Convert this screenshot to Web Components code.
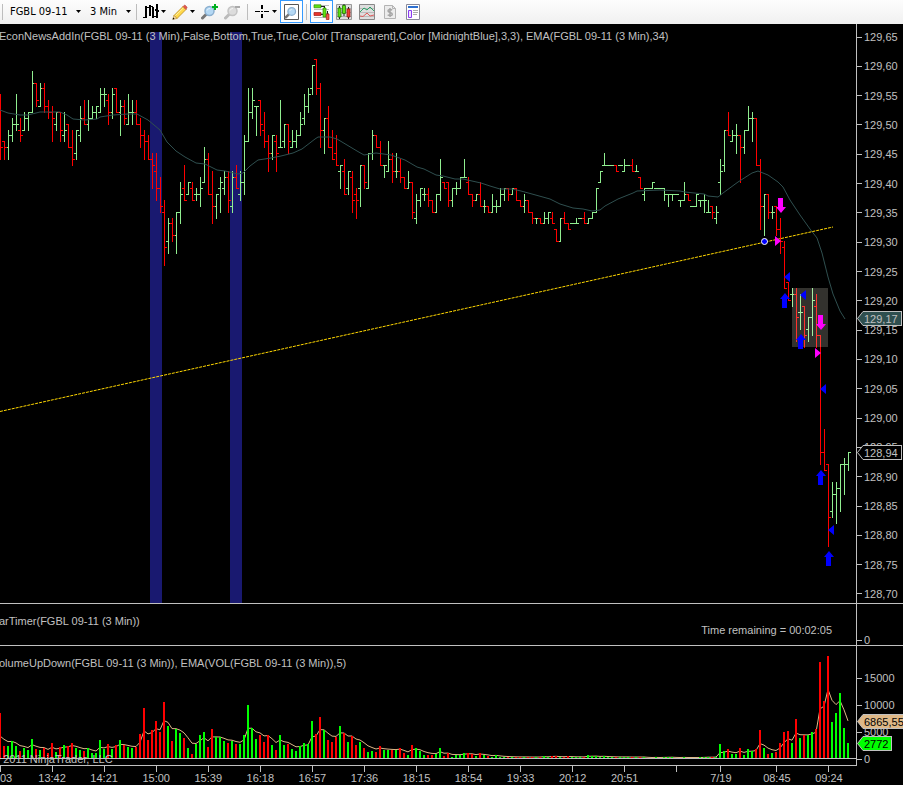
<!DOCTYPE html>
<html lang="en">
<head>
<meta charset="utf-8">
<title>FGBL 09-11 (3 Min)</title>
<style>
  body {
    margin: 0;
    background: #000;
    color: #c0c0c0;
    font: 11px/12px "Liberation Sans", Arial, sans-serif;
  }
</style>
</head>
<body>
<chart-window>
  <tool-bar slot="toolbar"></tool-bar>
  <chart-pane slot="price" caption="EconNewsAddIn(FGBL 09-11 (3 Min),False,Bottom,True,True,Color [Transparent],Color [MidnightBlue],3,3), EMA(FGBL 09-11 (3 Min),34)">
    <price-plot></price-plot>
    <value-axis slot="axis" from="129.65" to="128.70" step="0.05" digits="2" style="--top: 7px; --bottom: 3px">
      <price-tag style="--at: 287px; --fill: #2f4f4f">129,17</price-tag>
      <price-tag style="--at: 421px">128,94</price-tag>
    </value-axis>
  </chart-pane>
  <chart-pane slot="timer" caption="arTimer(FGBL 09-11 (3 Min))">
    <bar-timer>Time remaining = 00:02:05</bar-timer>
    <value-axis slot="axis" from="0" to="0" step="1" style="--top: 30px; --bottom: 0px"></value-axis>
  </chart-pane>
  <chart-pane slot="volume" caption="olumeUpDown(FGBL 09-11 (3 Min)), EMA(VOL(FGBL 09-11 (3 Min)),5)">
    <volume-plot></volume-plot>
    <value-axis slot="axis" from="15000" to="0" step="5000" style="--top: 26px; --bottom: 0px">
      <price-tag style="--at: 68px; --fill: #deb887; --ink: #000">6865,55</price-tag>
      <price-tag style="--at: 90px; --fill: #0f0; --ink: #000">2772</price-tag>
    </value-axis>
  </chart-pane>
  <time-axis slot="time"></time-axis>
</chart-window>

<script>
/**
 * html is a template tag used to construct a <template>.
 * @param {TemplateStringsArray} strings
 */
function html(strings, ...values) {
  const template = document.createElement("template");
  template.innerHTML = String.raw(strings, ...values);
  return template;
}

class BaseElement extends HTMLElement {
  constructor() {
    super();
    this.attachShadow({ mode: "open" }).appendChild(
      this.constructor.template.content.cloneNode(true)
    );
  }
}

// One entry per 3 minute bar: direction, then open, high, low and close in
// ticks below 129.60, then the height of the volume bar.
const bars = `
r5 5 16 14 45|r13 13 16 14 12|g14 11 16 12 12|g12 9 13 10 17|g10 5 11 10 12|r11 9 13 12 7
g11 8 11 9 10|g9 8 11 8 8|g8 1 8 3 19|r3 3 7 6 9|g7 3 7 4 8|r4 3 8 7 10
r7 6 9 8 5|r8 7 13 9 15|g10 8 11 8 6|r8 8 13 11 11|g12 8 13 11 13|r10 10 14 14 12
r14 11 17 16 15|g15 11 16 11 10|g12 7 13 9 8|r9 6 10 10 7|g10 6 11 9 10|g9 7 9 8 5
g8 7 9 7 5|g8 4 8 5 18|g5 4 7 5 9|r6 5 10 8 14|g8 4 9 5 9|r4 4 8 8 13
g8 6 12 7 18|r7 6 10 9 13|g10 5 10 8 11|g8 6 10 8 10|r8 6 10 10 11|r10 9 14 12 24
r12 11 16 13 50|r13 12 16 16 18|r16 15 21 17 28|r18 15 23 21 37|r21 19 25 24 26|r25 23 34 31 56
g30 26 32 27 32|r27 26 30 29 17|g29 25 32 25 29|g25 20 27 22 25|r21 17 23 23 20|g22 20 22 20 10
r21 20 23 23 4|g22 21 23 22 14|g22 19 24 21 23|g20 14 20 16 26|r16 15 22 22 11|r22 18 27 24 29
g24 22 26 22 21|g21 19 25 20 21|g21 18 22 19 17|r19 18 25 23 15|g24 18 25 19 17|r19 17 21 21 14
g22 18 23 20 14|g20 12 22 13 23|g13 4 13 8 53|g8 4 9 6 30|g7 7 12 7 19|r6 6 12 10 23
r11 8 14 13 16|r13 12 18 15 23|g15 12 16 12 13|r13 12 18 15 8|g14 6 14 14 23|g13 10 14 10 13
r10 10 15 13 14|g14 11 14 13 9|g13 11 14 12 7|g12 8 12 10 12|g9 5 10 7 15|g7 4 8 5 14
g4 0 5 0 37|r-1 -1 5 4 24|r4 3 14 11 41|g11 9 15 9 28|r9 7 14 14 18|r14 11 16 16 16
r15 12 17 17 21|g18 17 21 17 32|r18 16 22 22 25|g21 18 22 18 16|r19 18 25 23 22|r22 21 26 23 13
g21 17 24 17 16|r17 17 21 20 10|g21 15 21 15 6|g15 11 16 12 7|r12 12 14 14 6|r14 13 17 17 12
g17 17 19 17 8|g18 13 18 16 8|r16 15 20 18 8|g18 15 19 18 8|r18 16 20 19 10|r19 19 21 21 5
g21 18 21 20 3|r20 20 26 25 13|g26 22 27 23 10|g23 21 24 21 7|g22 21 23 22 3|r22 21 24 23 3
r23 23 25 25 3|g25 22 25 22 4|g22 16 23 19 10|r20 20 21 21 2|r20 20 24 23 5|g23 21 24 21 1
g21 20 22 21 3|g21 19 21 19 3|g19 16 19 19 5|r20 19 22 22 5|r22 22 24 23 4|g23 22 23 22 2
r22 20 24 24 5|g24 23 25 24 3|r24 24 25 25 2|g25 22 25 24 1|g24 23 25 24 3|g24 21 24 22 1
g22 21 23 21 1|r21 21 23 22 1|g22 21 22 21 1|r21 21 23 23 1|r23 23 24 24 1|g24 22 25 23 1
r23 23 25 25 1|r25 25 27 26 1|g26 26 27 26 1|r26 26 27 27 1|g27 25 27 26 2|g26 25 27 25 1
r26 25 27 27 2|r28 28 30 30 2|g30 26 30 26 1|r26 25 27 27 1|r27 27 28 28 2|g27 27 27 27 1
g27 26 27 27 1|g26 26 26 26 1|r26 25 27 27 1|g27 26 27 26 3|g26 25 26 25 2|g25 21 25 21 2
g20 18 20 18 1|g17 15 17 17 2|g17 17 17 17 1|g17 17 17 17 1|r17 17 18 18 1|g17 17 17 17 1
g18 16 18 17 1|g17 17 17 17 1|r17 16 18 18 1|g18 17 18 18 1|r19 19 21 21 1|g22 21 23 21 1
g21 21 21 21 0|g21 20 21 20 0|g21 21 21 21 1|g21 21 21 21 0|g21 21 23 22 1|g22 22 24 22 1
g22 22 23 22 1|g22 22 22 22 0|g23 23 24 23 0|g23 20 23 22 1|r22 22 23 23 0|g24 24 24 24 0
g24 22 24 22 0|g23 23 24 23 1|g23 22 25 23 1|g25 23 25 25 1|r24 24 26 25 1|g26 24 27 25 1
g20 16 22 18 14|g17 11 18 11 7|r11 8 12 12 9|g13 11 13 12 4|g12 10 15 12 4|r12 12 20 14 10
g14 11 15 11 3|g11 7 11 9 9|g9 8 13 9 7|r9 9 17 17 9|r17 16 28 24 28|g24 22 29 22 10
r22 22 26 25 4|g25 24 26 25 5|r24 24 29 28 6|r28 26 32 30 15|r31 30 38 38 26|r37 37 40 40 27
g39 38 41 39 15|r39 38 47 43 39|g42 39 45 42 20|r41 41 48 46 23|g45 43 47 43 23|g43 38 46 40 26
r41 39 48 46 29|r46 46 68 66 96|r66 62 69 69 57|r68 68 82 77 102|g76 71 77 73 36|g73 71 78 72 45
g72 68 76 68 65|g68 67 73 68 30|g68 66 69 66 15`
  .trim()
  .split(/[|\n]/)
  .map((bar) => {
    const [open, high, low, close, volume] = bar.slice(1).split(" ").map(Number);
    return { up: bar[0] === "g", open, high, low, close, volume };
  });

const BAR_WIDTH = 4;

/** Draws one colour's open/high/low/close bars as a single path. */
function ohlcPath(up) {
  const y = (tick) => Math.round(41 + tick * 5.87);
  return bars
    .map((bar, i) => {
      if (bar.up !== up) return "";
      const x = i * BAR_WIDTH;
      const height = y(bar.low) - y(bar.high) + 1;
      return (
        `M${x} ${y(bar.high)}h1v${height}h-1z` +
        `M${x - 2} ${y(bar.open)}h2v1h-2z` +
        `M${x + 1} ${y(bar.close)}h2v1h-2z`
      );
    })
    .join("");
}

function volumePath(up) {
  return bars
    .map((bar, i) =>
      bar.up === up && bar.volume
        ? `M${i * BAR_WIDTH - 1} 112v-${bar.volume}h2v${bar.volume}z`
        : ""
    )
    .join("");
}

/** Exponential average of the volume, 5 bars. */
function volumeEma() {
  let ema = 22;
  return bars
    .map((bar, i) => {
      if (i) ema += (bar.volume - ema) / 3;
      return `${i * BAR_WIDTH},${(112 - Math.max(ema, 0.5)).toFixed(1)}`;
    })
    .join(" ");
}

const arrow = "M-2-7h5v9h3l-5 6-5-6h2z";
const upArrow = "M-2 8h5v-9h3l-5-6-5 6h2z";

class PricePlot extends BaseElement {
  static template = html`
    <style>
      :host { display: block; height: 100%; }
      svg { display: block; width: 100%; height: 100%; }
      .crisp { shape-rendering: crispEdges; }
    </style>
    <svg viewBox="0 0 856 579" preserveAspectRatio="none" aria-label="Price">
      <g class="crisp">
        <path fill="#191970" d="M150 8h12v571h-12zM230 8h12v571h-12z"/>
        <path fill="#90ee90" d="${ohlcPath(true)}"/>
        <path fill="#f00" d="${ohlcPath(false)}"/>
      </g>
      <polyline fill="none" stroke="#2f4f4f" points="0,86 8,89 20,91 28,91 40,88 60,88 67,91 73,95 85,96 97,95
        100,93 113,91 128,90 137,90 148,96 160,106 167,118 176,127 185,133 196,139 205,140 217,146 225,147
        238,150 243,149 250,142 258,136 271,134 281,132 285,131 293,129 302,125 315,115 318,113 330,113
        337,115 347,121 357,127 364,131 376,129 391,131 405,136 417,143 424,145 436,151 443,152 455,155
        463,155 481,159 490,162 500,165 512,165 521,167 532,170 550,175 560,180 573,184 583,185 592,187
        600,186 605,182 618,175 633,169 637,167 660,166 680,167 685,168 704,170 708,172 718,173 723,169
        738,158 752,149 758,147 768,151 778,158 783,163 790,176 800,191 810,205 817,214 822,229 828,253
        833,270 840,287 845,295"/>
      <path stroke="#ffd700" stroke-dasharray="3 1" d="M0 387.5 833 203"/>
      <path class="crisp" fill="#fffae6" fill-opacity=".2" d="M792 264h36v59h-36z"/>
      <g fill="#f0f">
        <path transform="translate(780 181)" d="${arrow}"/>
        <path transform="translate(820 298)" d="${arrow}"/>
        <path d="M775 212v10l6-5zM815 324v10l6-5z"/>
      </g>
      <g fill="#00f">
        <path transform="translate(784 276)" d="${upArrow}"/>
        <path transform="translate(800 317)" d="${upArrow}"/>
        <path transform="translate(820 453)" d="${upArrow}"/>
        <path transform="translate(828 534)" d="${upArrow}"/>
        <path d="M790 248v10l-6-5zM806 266v10l-6-5zM826 360v10l-6-5zM834 501v10l-6-5z"/>
      </g>
      <circle cx="764.5" cy="217.5" r="3" fill="#00f" stroke="#fff"/>
    </svg>
  `;
}

class VolumePlot extends BaseElement {
  static template = html`
    <style>
      :host { display: block; height: 100%; }
      svg { display: block; width: 100%; height: 100%; }
      p { position: absolute; left: -8px; bottom: 0; margin: 0; white-space: pre; }
    </style>
    <svg viewBox="0 0 856 119" preserveAspectRatio="none" aria-label="Volume">
      <polyline fill="none" stroke="#deb887" points="${volumeEma()}"/>
      <g shape-rendering="crispEdges">
        <path fill="#0f0" d="${volumePath(true)}"/>
        <path fill="#f00" d="${volumePath(false)}"/>
        <path fill="#c0c0c0" d="M0 112h856v1H0z"/>
      </g>
    </svg>
    <p>© 2011 NinjaTrader, LLC</p>
  `;
}

class BarTimer extends BaseElement {
  static template = html`
    <style>
      :host { display: block; padding: 20px 24px 0 0; text-align: right; }
    </style>
    <slot></slot>
  `;
}

class ChartPane extends BaseElement {
  static template = html`
    <style>
      :host { display: flex; min-height: 0; }
      .plot { position: relative; flex: 1; min-width: 0; overflow: hidden; }
      .caption { position: absolute; left: -1px; top: 0; margin: 0; padding-top: var(--caption-top, 11px);
        white-space: nowrap; font-weight: normal; font-size: 11px; }
    </style>
    <div class="plot">
      <slot></slot>
      <h2 class="caption"></h2>
    </div>
    <slot name="axis"></slot>
  `;

  connectedCallback() {
    this.shadowRoot.querySelector(".caption").textContent = this.getAttribute("caption");
  }
}

class ValueAxis extends BaseElement {
  static template = html`
    <style>
      :host { position: relative; display: block; width: 46px; border-left: 1px solid #c0c0c0; }
      .labels { display: flex; flex-direction: column; justify-content: space-between;
        box-sizing: border-box; height: 100%; padding: var(--top) 0 var(--bottom); }
      .labels span { display: flex; align-items: center; gap: 2px; height: 12px; }
      .labels span::before { content: ""; width: 5px; height: 1px; background: #c0c0c0; }
    </style>
    <div class="labels"></div>
    <slot></slot>
  `;

  connectedCallback() {
    const number = (name) => Number(this.getAttribute(name) || 0);
    const labels = this.shadowRoot.querySelector(".labels");
    const count = Math.round((number("from") - number("to")) / number("step"));
    for (let i = 0; i <= count; i++) {
      const label = document.createElement("span");
      const value = number("from") - i * number("step");
      label.textContent = value.toFixed(number("digits")).replace(".", ",");
      labels.appendChild(label);
    }
  }
}

class PriceTag extends BaseElement {
  static template = html`
    <style>
      :host { position: absolute; left: 0; top: var(--at); display: flex; color: var(--ink, #c0c0c0); }
      svg { display: block; }
      span { box-sizing: border-box; height: 15px; padding: 0 3px 0 1px; line-height: 14px;
        background: var(--fill, #000); border: solid #c0c0c0; border-width: 1px 1px 1px 0; }
    </style>
    <svg width="6" height="15"><path fill="var(--fill, #000)" stroke="#c0c0c0" d="M6 .5.5 7.5 6 14.5"/></svg>
    <span><slot></slot></span>
  `;
}

class TimeAxis extends BaseElement {
  static template = html`
    <style>
      :host { display: block; padding-right: 46px; }
      ol { display: grid; grid-template-columns: 26fr repeat(13, 52fr) 36fr 76fr 28fr 14fr;
        margin: 0; padding: 0; list-style: none; border-top: 1px solid #c0c0c0; }
      li { display: flex; flex-direction: column; align-items: center; min-width: 0; white-space: nowrap; }
      li::before { content: ""; width: 1px; height: 6px; background: #c0c0c0; }
      li:first-child { align-items: flex-start; }
    </style>
    <ol>
      <li>03</li><li>13:42</li><li>14:21</li><li>15:00</li><li>15:39</li><li>16:18</li>
      <li>16:57</li><li>17:36</li><li>18:15</li><li>18:54</li><li>19:33</li><li>20:12</li>
      <li>20:51</li><li></li><li>7/19</li><li>08:45</li><li>09:24</li>
    </ol>
  `;
}

class DropDown extends BaseElement {
  static template = html`
    <style>
      :host { display: grid; align-items: center; }
      select, svg { grid-area: 1 / 1; }
      select { appearance: none; width: 100%; margin: 0; padding: 0; border: 0; background: none; color: #000;
        font: 11px/16px Tahoma, "DejaVu Sans Condensed", sans-serif; }
      svg { justify-self: end; pointer-events: none; }
    </style>
    <select></select>
    <svg width="5" height="3"><path d="M0 0h5L2.5 3z"/></svg>
  `;

  connectedCallback() {
    const select = this.shadowRoot.querySelector("select");
    select.setAttribute("aria-label", this.getAttribute("label"));
    select.add(new Option(this.getAttribute("value")));
  }
}

class ToolButton extends BaseElement {
  static template = html`
    <style>
      :host { display: block; }
      button { display: flex; align-items: center; gap: 2px; box-sizing: border-box; height: 23px;
        margin: 0; padding: 0 2px; border: 1px solid transparent; background: none; min-width: 23px; }
      :host([pressed]) button { border-color: #3399ff; background: #fff; }
      .drop { display: none; }
      :host([menu]) .drop { display: block; }
    </style>
    <button type="button">
      <slot></slot>
      <svg class="drop" width="5" height="3"><path d="M0 0h5L2.5 3z"/></svg>
    </button>
  `;

  connectedCallback() {
    this.shadowRoot.querySelector("button").setAttribute("aria-label", this.getAttribute("label"));
  }
}

const lens = (ring, glass, handle) => `
  <path stroke="${handle}" stroke-width="3" stroke-linecap="round" d="M5 10.500 1.500 14"/>
  <circle cx="8.500" cy="7" r="4.500" fill="${glass}" stroke="${ring}" stroke-width="1.500"/>
  <path fill="none" stroke="#fff" stroke-opacity=".7" d="M6 6.500c.5-1.500 2-2 3-2"/>`;

class ToolBar extends BaseElement {
  static template = html`
    <style>
      :host { display: block; background: linear-gradient(#fdfdfd, #f0f0f0); overflow: hidden; }
      nav { display: flex; align-items: flex-start; height: 24px; padding-left: 2px; }
      .sep { width: 1px; height: 16px; margin: 4px 3px 0; background: #bdbdbd; }
      .sep:first-child { margin-left: 0; }
      drop-down { height: 23px; }
      .symbol { width: 71px; margin: 0 9px 0 4px; }
      .period { width: 41px; margin-right: 2px; }
      svg { display: block; }
    </style>
    <nav>
      <span class="sep"></span>
      <drop-down class="symbol" label="Instrument" value="FGBL 09-11"></drop-down>
      <drop-down class="period" label="Interval" value="3 Min"></drop-down>
      <span class="sep"></span>
      <tool-button label="Chart style" menu>
        <svg width="16" height="16"><path shape-rendering="crispEdges" d="M2 2h2v12H0v-1h2zM4 3h2v1H4zM6 1h2v11H6zM8 2h2v1H8zM9 3h2v11H9zM11 12h2v1h-2zM13 0h2v14h-2zM15 6h1v2h-1zM12 5h1v2h-1z"/></svg>
      </tool-button>
      <tool-button label="Drawing tools" menu>
        <svg width="16" height="16">
          <path fill="#ffd84a" stroke="#b98a1c" stroke-width=".8" d="M2 11.500 11 2.500l3 3-9 9z"/>
          <path stroke="#fff3a8" d="M3.500 11.500 11.500 3.800"/>
          <path fill="#e4574d" stroke="#b5443b" stroke-width=".6" d="m11 2.500 1-1q.7-.7 1.500 0l1.200 1.300q.8.700 0 1.500L14 5.500z"/>
          <path fill="#f4d9ac" stroke="#b98a1c" stroke-width=".6" d="M2 11.500.8 15.300 5 14.500z"/>
          <path d="m1.200 13.500-.6 2 2-.6z"/>
        </svg>
      </tool-button>
      <tool-button label="Zoom in">
        <svg width="17" height="16">${lens("#8cb0d0", "#b4d8f4", "#777")}<path fill="#00b020" d="M13 0h2v2h2v2h-2v2h-2V4h-2V2h2z"/></svg>
      </tool-button>
      <tool-button label="Zoom out">
        <svg width="16" height="16">${lens("#c3c3c3", "#dcdcdc", "#bbb")}<path fill="#aaa" d="M11 2h5v2h-5z"/></svg>
      </tool-button>
      <span class="sep"></span>
      <tool-button label="Cross hair" menu>
        <svg width="16" height="16"><path shape-rendering="crispEdges" d="M7 1h2v4H7zM7 10h2v4H7zM1 7h5v1H1zM10 7h5v1h-5zM7 7h2v1H7z"/></svg>
      </tool-button>
      <tool-button label="Show zoom" pressed>
        <svg width="16" height="16"><path fill="#fff" stroke="#555" d="M1.500.5h14v15h-14z"/>
          <g transform="translate(1.500 1.500) scale(.85)">${lens("#8cb0d0", "#b4d8f4", "#777")}</g></svg>
      </tool-button>
      <span class="sep"></span>
      <tool-button label="Chart trader" pressed>
        <svg width="17" height="16">
          <path fill="none" stroke="#bbb" d="M1 1.500h15M1 5.500h15M1 9.500h15M1 13.500h15"/>
          <path fill="#5de312" stroke="#318a08" stroke-width=".7" d="M1 .8h7v3H1z"/>
          <path fill="#e6352d" stroke="#a01c17" stroke-width=".7" d="M1 8.500h7v3H1z"/>
          <path stroke="#222" d="M8 2.500h3M8 10.500h2M11.500 2v2M14.500 7v3"/>
          <path fill="#5de312" stroke="#318a08" stroke-width=".7" d="M10 4h3v9h-3z"/>
          <path fill="#f05a4a" stroke="#a01c17" stroke-width=".7" d="M13.300 10h2.700v5.500h-2.700z"/>
        </svg>
      </tool-button>
      <tool-button label="Data series">
        <svg width="16" height="16">
          <path fill="#ddd" stroke="#999" d="M.5.5h15v15H.5z"/>
          <path stroke="#aaa" d="M1 4.500h14M1 8.500h14M1 12.500h14"/>
          <path stroke="#222" d="M3.500 2v13M8 0v12M12.500 3v12"/>
          <path fill="#5de312" stroke="#267407" stroke-width=".8" d="M2 4h3v9H2zM6.500 1.500h3v8h-3z"/>
          <path fill="#f03e32" stroke="#921b14" stroke-width=".8" d="M11 5h3v8h-3z"/>
        </svg>
      </tool-button>
      <tool-button label="Indicators">
        <svg width="16" height="16">
          <path fill="#dedede" stroke="#888" d="M.5.5h15v15H.5z"/>
          <path stroke="#bbb" d="M1 4.500h14M1 8.500h14M1 12.500h14"/>
          <path fill="none" stroke="#2ba366" d="m1 8 4-4 3 2 3-3 4 4"/>
          <path fill="none" stroke="#e05a5a" d="m1 12 3 .5L8 9l3 3 4-1"/>
        </svg>
      </tool-button>
      <tool-button label="Strategies">
        <svg width="16" height="16">
          <path fill="#ececec" stroke="#b4b4b4" d="M2.500 1.500h8l3 3v10h-11z"/>
          <path fill="none" stroke="#b4b4b4" d="M10.500 1.500v3h3"/>
          <path fill="none" stroke="#a5a5a5" stroke-width="1.500" d="M10.200 6.200C9 5.200 6 5.200 6 7s4.300 1.200 4.300 3.200S7 12 5.700 10.800M8 4v9"/>
        </svg>
      </tool-button>
      <tool-button label="Properties">
        <svg width="16" height="16">
          <path fill="#fff" stroke="#8a8a9a" d="M1.500.5h13v15h-13z"/>
          <path fill="#2c6fd0" d="M3 2h10v2H3z"/>
          <path fill="#efe3ff" stroke="#8a3cf0" d="M3.500 6.500h3v7h-3z"/>
          <path stroke="#aaa" d="M8 6.500h5M8 8.500h5M8 10.500h4"/>
        </svg>
      </tool-button>
    </nav>
  `;
}

class ChartWindow extends BaseElement {
  static template = html`
    <style>
      :host { display: grid; grid-template-rows: 24px minmax(300px, 1fr) 42px 120px 20px;
        grid-template-columns: minmax(0, 1fr); height: 100vh; overflow: hidden; }
      ::slotted([slot="price"]) { --caption-top: 6px; }
      ::slotted([slot="timer"]), ::slotted([slot="volume"]) { border-top: 1px solid #c0c0c0; }
    </style>
    <slot name="toolbar"></slot>
    <slot name="price"></slot>
    <slot name="timer"></slot>
    <slot name="volume"></slot>
    <slot name="time"></slot>
  `;
}

customElements.define("price-plot", PricePlot);
customElements.define("volume-plot", VolumePlot);
customElements.define("bar-timer", BarTimer);
customElements.define("value-axis", ValueAxis);
customElements.define("price-tag", PriceTag);
customElements.define("time-axis", TimeAxis);
customElements.define("chart-pane", ChartPane);
customElements.define("drop-down", DropDown);
customElements.define("tool-button", ToolButton);
customElements.define("tool-bar", ToolBar);
customElements.define("chart-window", ChartWindow);
</script>
</body>
</html>
